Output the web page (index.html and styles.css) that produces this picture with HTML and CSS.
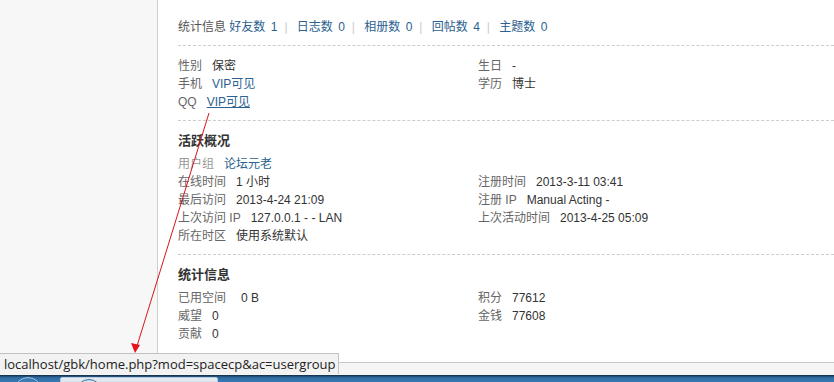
FILE: index.html
```html
<!DOCTYPE html>
<html>
  <head>
    <meta charset="utf-8">
    <title>个人资料</title>
    <link rel="stylesheet" href="styles.css">
  </head>
  <body>
    <div id="screen">
      <div id="page">
        <div id="side"></div>

        <div id="main">
          <!-- counts -->
          <div class="block counts">
            <span class="lbl">统计信息</span>
            <a href="#">好友数 1</a><span class="pipe">|</span>
            <a href="#">日志数 0</a><span class="pipe">|</span>
            <a href="#">相册数 0</a><span class="pipe">|</span>
            <a href="#">回帖数 4</a><span class="pipe">|</span>
            <a href="#">主题数 0</a>
          </div>

          <!-- basic profile -->
          <div class="block">
            <ul class="pf">
              <li><em>性别</em>保密</li>
              <li><em>生日</em>-</li>
              <li><em>手机</em><a href="#">VIP可见</a></li>
              <li><em>学历</em>博士</li>
              <li><em>QQ</em><a href="#" class="hover">VIP可见</a></li>
            </ul>
          </div>

          <div class="block">
            <h2>活跃概况</h2>
            <ul class="pf">
              <li class="full"><em class="light">用户组</em><a href="#">论坛元老</a></li>
              <li><em>在线时间</em>1 小时</li>
              <li><em>注册时间</em>2013-3-11 03:41</li>
              <li><em>最后访问</em>2013-4-24 21:09</li>
              <li><em>注册 IP</em>Manual Acting -</li>
              <li><em>上次访问 IP</em>127.0.0.1 - - LAN</li>
              <li><em>上次活动时间</em>2013-4-25 05:09</li>
              <li><em>所在时区</em>使用系统默认</li>
            </ul>
          </div>

          <div class="block last">
            <h2>统计信息</h2>
            <ul class="pf">
              <li><em class="wide">已用空间</em>0 B</li>
              <li><em>积分</em>77612</li>
              <li><em>威望</em>0</li>
              <li><em>金钱</em>77608</li>
              <li><em>贡献</em>0</li>
            </ul>
          </div>
        </div>
      </div>

      <div id="statusbar"></div>
      <div id="taskbar">
        <span class="orb"></span>
        <span class="task"><span class="task-icon"></span></span>
      </div>

      <!-- browser status bubble -->
      <div id="status-url">localhost/gbk/home.php?mod=spacecp&amp;ac=usergroup</div>

      <!-- annotation arrow -->
      <svg id="arrow" width="834" height="382" viewBox="0 0 834 382">
        <line x1="209" y1="113" x2="137" y2="346" stroke="#d8131b" stroke-width="1"/>
        <polygon points="135,353 131,343 140,345" fill="#e3141c"/>
      </svg>
    </div>
  </body>
</html>
```

FILE: styles.css
```css
html, body {
  margin: 0;
  padding: 0;
}

body {
  font: 12px/18px "Liberation Sans", "Noto Sans CJK SC", sans-serif;
  color: #333;
  background: #fff;
}

#screen {
  position: relative;
  width: 834px;
  height: 382px;
  overflow: hidden;
  display: flex;
  flex-direction: column;
}

#page {
  display: flex;
  height: 362px;
}

#side {
  width: 157px;
  background: #f7f7f7;
  border-right: 1px solid #cfcfcf;
}

#main {
  flex: 1;
  padding: 18px 0 0 20px;
}

.block {
  padding: 11px 0 9px;
  border-bottom: 1px dashed #cdcdcd;
}

.block.counts {
  padding-top: 0;
}

.block.last {
  border-bottom: none;
}

a {
  color: #2a6190;
  text-decoration: none;
}

a.hover {
  text-decoration: underline;
}

.counts a {
  word-spacing: 2px;
}

.counts .lbl {
  color: #555;
}

.pipe {
  color: #ccc;
  margin: 0 6px 0 7px;
}

h2 {
  margin: 0 0 5px;
  font-size: 13px;
  line-height: 18px;
  font-weight: bold;
  color: #333;
}

ul.pf {
  margin: 0;
  padding: 0;
  list-style: none;
  display: grid;
  grid-template-columns: 300px 1fr;
}

ul.pf li {
  height: 18px;
  white-space: nowrap;
}

ul.pf li.full {
  grid-column: 1 / 3;
}

ul.pf em {
  font-style: normal;
  color: #666;
  margin-right: 10px;
}

ul.pf em.light {
  color: #999;
}

ul.pf em.wide {
  margin-right: 15px;
}

#statusbar {
  height: 12px;
  background: #f5f5f5;
  border-top: 1px solid #c9c9c9;
}

#taskbar {
  flex: 1;
  position: relative;
  background: linear-gradient(#1d4670, #2f6ea6 2px, #3878b0);
  border-top: 1px solid #163553;
}

.orb {
  position: absolute;
  left: 14px;
  top: 1px;
  width: 26px;
  height: 26px;
  border-radius: 50%;
  border: 1px solid #9fc2de;
  background: #3d7bb3;
}

.task {
  position: absolute;
  left: 60px;
  top: 1px;
  width: 156px;
  height: 20px;
  border: 1px solid #b9c9d8;
  border-radius: 2px;
  background: linear-gradient(#e6edf4, #a9c2d9);
}

.task-icon {
  position: absolute;
  left: 15px;
  top: 1px;
  width: 24px;
  height: 24px;
  border-radius: 50%;
  border: 1px solid #3a6d9b;
  background: #d7e4ef;
}

#status-url {
  position: absolute;
  left: 0;
  top: 353px;
  height: 20px;
  padding: 0 3px 0 4px;
  font: 13px/20px "Open Sans", "Liberation Sans", sans-serif;
  color: #222;
  background: #f2f2f2;
  border: 1px solid #c2c2c2;
  border-left: none;
  border-bottom: none;
}

#arrow {
  position: absolute;
  left: 0;
  top: 0;
  pointer-events: none;
}
```
